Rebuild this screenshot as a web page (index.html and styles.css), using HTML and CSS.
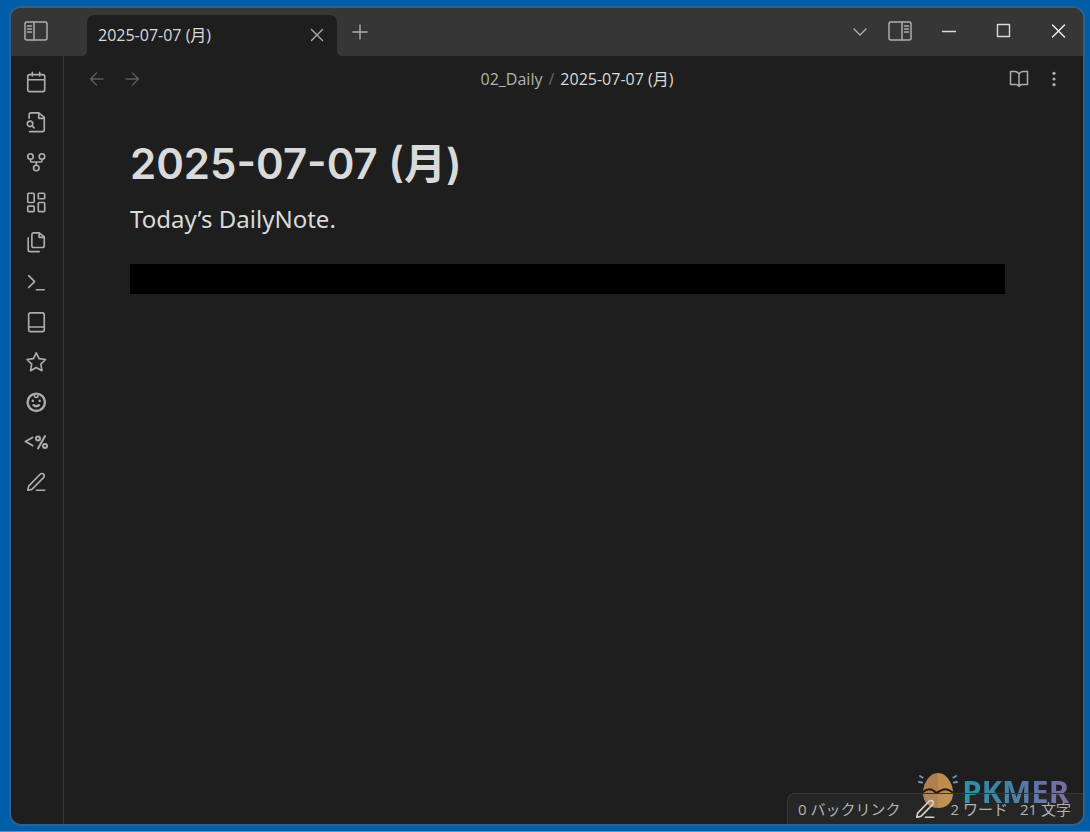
FILE: index.html
```html
<!DOCTYPE html>
<html lang="ja">
<head>
<meta charset="utf-8">
<meta name="viewport" content="width=device-width, initial-scale=1">
<title>2025-07-07 (月)</title>
<link rel="stylesheet" href="styles.css">
</head>
<body>
<div class="window">
  <header class="titlebar">
    <button class="icon-btn sidebar-toggle" aria-label="左サイドバー"><svg class="panel" viewBox="0 0 24 20"><rect x="1" y="1" width="22" height="18" rx="2"/><path d="M10 1v18M3.500 5h4M3.500 8h4M3.500 11h4"/></svg></button>
    <div class="tab">
      <span class="tab-title">2025-07-07 (月)</span>
      <button class="icon-btn" aria-label="閉じる"><svg class="small" viewBox="0 0 16 16"><path d="M2.500 2.500l11 11M13.500 2.500l-11 11"/></svg></button>
    </div>
    <button class="icon-btn new-tab" aria-label="新規タブ"><svg class="small" viewBox="0 0 16 16"><path d="M8 1v14M1 8h14"/></svg></button>
    <div class="window-tools">
      <button class="icon-btn" aria-label="タブ一覧"><svg class="small" viewBox="0 0 16 16"><path d="M2 6l6 6 6-6"/></svg></button>
      <button class="icon-btn panel-right" aria-label="右サイドバー"><svg class="panel" viewBox="0 0 24 20"><rect x="1" y="1" width="22" height="18" rx="2"/><path d="M14 1v18M16.500 5h4M16.500 8h4M16.500 11h4"/></svg></button>
      <button class="caption" aria-label="最小化"><svg class="small" viewBox="0 0 16 16"><path d="M1.500 8.500h13"/></svg></button>
      <button class="caption" aria-label="最大化"><svg class="small" viewBox="0 0 16 16"><path d="M1.500 1.500h12v12h-12z"/></svg></button>
      <button class="caption close" aria-label="ウィンドウを閉じる"><svg class="small" viewBox="0 0 16 16"><path d="M1.500 2l12 12M13.500 2l-12 12"/></svg></button>
    </div>
  </header>
  <div class="workspace">
    <nav class="ribbon" aria-label="リボン">
      <button class="icon-btn" aria-label="デイリーノート"><svg viewBox="0 0 24 24"><rect x="3" y="4" width="18.500" height="18.500" rx="2"/><path d="M8 1.500v4M16 1.500v4M3 9.500h18"/></svg></button>
      <button class="icon-btn" aria-label="クイックスイッチャー"><svg viewBox="0 0 24 24"><path d="M4.500 8V4a2 2 0 0 1 2-2H15l6 5v13.500a2 2 0 0 1-2 2H5M15 2v6h6"/><circle cx="5.500" cy="14" r="3"/><path d="M7.700 16.200L10 18.500"/></svg></button>
      <button class="icon-btn" aria-label="グラフビュー"><svg viewBox="0 0 24 24"><circle cx="6" cy="6" r="3"/><circle cx="18.500" cy="6" r="3"/><circle cx="12.300" cy="18.500" r="3"/><path d="M6 9v1.500Q6 12 7.500 12H17q1.500 0 1.500-1.500V9M12.300 12v3.500"/></svg></button>
      <button class="icon-btn" aria-label="キャンバス"><svg viewBox="0 0 24 24"><rect x="3" y="2.500" width="7" height="10" rx="1"/><rect x="14.500" y="2.500" width="7" height="6" rx="1"/><rect x="14.500" y="12.500" width="7" height="10" rx="1"/><rect x="3" y="16.500" width="7" height="6" rx="1"/></svg></button>
      <button class="icon-btn" aria-label="テンプレート"><svg viewBox="0 0 24 24"><path d="M15.500 2H9.500a2 2 0 0 0-2 2v12a2 2 0 0 0 2 2H19a2 2 0 0 0 2-2V6.500zM15.500 2v5H21M3.500 7.500v13a2 2 0 0 0 2 2H15.500"/></svg></button>
      <button class="icon-btn" aria-label="コマンドパレット"><svg viewBox="0 0 24 24"><path d="M4 5l6.500 6.500L4 18M12.500 20.500H21"/></svg></button>
      <button class="icon-btn" aria-label="ブック"><svg viewBox="0 0 24 24"><rect x="4" y="2" width="17" height="20.500" rx="2"/><path d="M4 17.500h17"/></svg></button>
      <button class="icon-btn" aria-label="スター"><svg viewBox="0 0 24 24"><path d="M12.300 2l3.100 6.300 7 1-5.100 5 1.200 7.200-6.200-3.400-6.200 3.400 1.200-7.200-5.100-5 7-1z"/></svg></button>
      <button class="icon-btn" aria-label="フェイス"><svg viewBox="0 0 24 24"><circle class="thick" cx="12.300" cy="12.300" r="9.500"/><path class="thick" d="M9.300 15.500q3 2.500 6 0M8.500 10.500v.3M16 10.500v.3"/><path d="M10 3.500Q10 7 12.500 7q2 0 1.500-2"/></svg></button>
      <button class="icon-btn" aria-label="Templater"><svg class="code" viewBox="0 0 24 24"><path class="bold" d="M8.500 7.500L1.500 11.500l7 4M21 6L14 18.500"/><circle class="bold" cx="14" cy="8.500" r="2"/><circle class="bold" cx="21" cy="16" r="2"/></svg></button>
      <button class="icon-btn" aria-label="編集"><svg viewBox="0 0 24 24"><path d="M12.500 21H21.500M4 16.500L16.500 3.500a2.500 2.500 0 0 1 3.700 3.700L7.500 20 3 21z"/></svg></button>
    </nav>
    <main class="pane">
      <div class="view-header">
        <div class="history">
          <button class="icon-btn" aria-label="戻る"><svg class="small" viewBox="0 0 16 16"><path d="M14 8H1.500M7.500 2l-6 6 6 6"/></svg></button>
          <button class="icon-btn" aria-label="進む"><svg class="small" viewBox="0 0 16 16"><path d="M2 8h12.500M8.500 2l6 6-6 6"/></svg></button>
        </div>
        <div class="breadcrumb"><a href="#daily">02_Daily</a><span class="slash">/</span><span class="current">2025-07-07 (月)</span></div>
        <div class="view-actions">
          <button class="icon-btn" aria-label="閲覧モード"><svg class="book" viewBox="0 0 20 18"><path d="M10 4q-1.500-2.500-4-2.500H1.500v13H7q2 0 3 2 1-2 3-2h5.500v-13H14q-2.500 0-4 2.500zv12.500"/></svg></button>
          <button class="icon-btn" aria-label="その他"><svg class="small dots" viewBox="0 0 16 16"><circle cx="8" cy="2.300" r="1.600"/><circle cx="8" cy="8" r="1.600"/><circle cx="8" cy="13.700" r="1.600"/></svg></button>
        </div>
      </div>
      <article class="note">
        <h1>2025-07-07 (月)</h1>
        <p>Today’s DailyNote.</p>
        <div class="block"></div>
      </article>
    </main>
  </div>
  <div class="brand">
    <svg class="egg" viewBox="0 0 40 38"><path d="M20 1C11 1 5 12 5 21c0 9 6 15 15 15z" fill="#ad8050"/><path d="M20 1c9 0 15 11 15 20 0 9-6 15-15 15z" fill="#bf8c4e"/><path d="M5 20q6-5 11-1l2 2q2-1 4-2 6-4 12 1" stroke="#201d1a" stroke-width="2"/><path d="M4.500 5.500L2 4M4 10.500L1 10M35.500 5.500L38 4M36 10.500l3-.500" stroke="#7195ad" stroke-width="2"/></svg>
    <span class="wordmark">PKMER</span>
  </div>
  <footer class="status">
    <span>0 バックリンク</span>
    <svg class="status-pen" viewBox="0 0 24 24"><path d="M12.500 21H21.500M4 16.500L16.500 3.500a2.500 2.500 0 0 1 3.700 3.700L7.500 20 3 21z"/></svg>
    <span>2 ワード</span>
    <span>21 文字</span>
  </footer>
</div>
</body>
</html>
```

FILE: styles.css
```css
* { box-sizing: border-box; }

body {
  margin: 0;
  height: 100vh;
  padding: 6px 5px 5px 9px;
  background: #005ea9;
  border-bottom: 1px solid #6292b9;
  font: 16px/24px "Open Sans", "Noto Sans CJK JP", sans-serif;
  color: #dadada;
}

button {
  display: flex;
  align-items: center;
  justify-content: center;
  padding: 0;
  border: 0;
  background: none;
  color: inherit;
}

svg {
  display: block;
  flex: none;
  width: 22px;
  height: 22px;
  fill: none;
  stroke: currentColor;
  stroke-width: 1.8;
  stroke-linecap: round;
  stroke-linejoin: round;
}

.small { width: 16px; height: 16px; stroke-width: 1.4; }
.panel { width: 24px; height: 20px; stroke-width: 1.5; }
.book { width: 20px; height: 18px; stroke-width: 1.5; }
.code { width: 24px; height: 24px; }
.bold { stroke-width: 2; }
.thick { stroke-width: 2.6; }
.dots { fill: currentColor; stroke: none; }

.window {
  position: relative;
  display: flex;
  flex-direction: column;
  height: 100%;
  overflow: hidden;
  border: 2px solid #2e618c;
  border-radius: 12px;
  background: #1e1e1e;
}

.icon-btn { width: 30px; height: 30px; color: #adadad; }

.titlebar {
  display: flex;
  align-items: flex-end;
  height: 48px;
  background: #363636;
}

.sidebar-toggle { margin: 0 36px 10px 10px; }

.tab {
  position: relative;
  display: flex;
  align-items: center;
  justify-content: space-between;
  width: 250px;
  height: 41px;
  padding: 0 5px 2px 11px;
  border-radius: 7px 7px 0 0;
  background: #1e1e1e;
}

.tab::before,
.tab::after {
  content: "";
  position: absolute;
  bottom: 0;
  width: 5px;
  height: 5px;
}

.tab::before {
  right: 100%;
  background: radial-gradient(circle at 0 0, transparent 5px, #1e1e1e 5px);
}

.tab::after {
  left: 100%;
  background: radial-gradient(circle at 100% 0, transparent 5px, #1e1e1e 5px);
}

.new-tab { margin: 0 0 9px 8px; }

.window-tools {
  display: flex;
  align-items: center;
  align-self: flex-start;
  height: 46px;
  margin-left: auto;
}

.panel-right { margin: 0 6px 0 10px; }
.caption { width: 55px; height: 46px; }
.close { color: #f2f2f2; margin-right: -3px; }

.workspace { display: flex; flex: 1; min-height: 0; }

.ribbon {
  display: flex;
  flex-direction: column;
  align-items: center;
  gap: 10px;
  width: 53px;
  padding: 11px 2px 0 0;
  border-right: 1px solid #363636;
}

.pane { flex: 1; min-width: 0; }

.view-header {
  display: grid;
  grid-template-columns: 1fr auto 1fr;
  align-items: center;
  height: 46px;
  padding: 0 14px 0 18px;
}

.history,
.view-actions { display: flex; gap: 5px; }
.view-actions { justify-content: flex-end; }
.history .icon-btn { color: #5c5c5c; }

.breadcrumb { display: flex; gap: 6px; padding-left: 3px; }
.breadcrumb a { color: #b3b3b3; text-decoration: none; }
.slash { color: #666; }

.note {
  padding: 32px 78px 0 66px;
  font-family: "Noto Sans", "Noto Sans CJK JP", sans-serif;
}

.note h1 {
  margin: 0;
  font: 600 42px/60px Inter, "Noto Sans CJK JP", sans-serif;
}

.note p { margin: 7px 0 27px; font-size: 24px; line-height: 36px; }

.block { height: 30px; background: #000; }

.status {
  position: absolute;
  right: 0;
  bottom: 0;
  display: flex;
  align-items: center;
  gap: 12px;
  height: 31px;
  padding: 0 12px 0 10px;
  border: 1px solid #363636;
  border-width: 1px 0 0 1px;
  border-radius: 8px 0 0 0;
  background: rgb(255 255 255 / 4%);
  color: #b3b3b3;
  font-size: 15px;
}

.status-pen { margin: 0 2px; color: #d8d0c4; }

.brand {
  position: absolute;
  right: 14px;
  bottom: 14px;
  display: flex;
  align-items: center;
  gap: 4px;
}

.egg { width: 40px; height: 38px; stroke: none; }

.wordmark {
  font: 700 31px/36px "Noto Sans", sans-serif;
  background: linear-gradient(90deg, #2b90ac, #3a84a8 35%, #5f74a8 70%, #7b69a6);
  background-clip: text;
  color: transparent;
}
```
